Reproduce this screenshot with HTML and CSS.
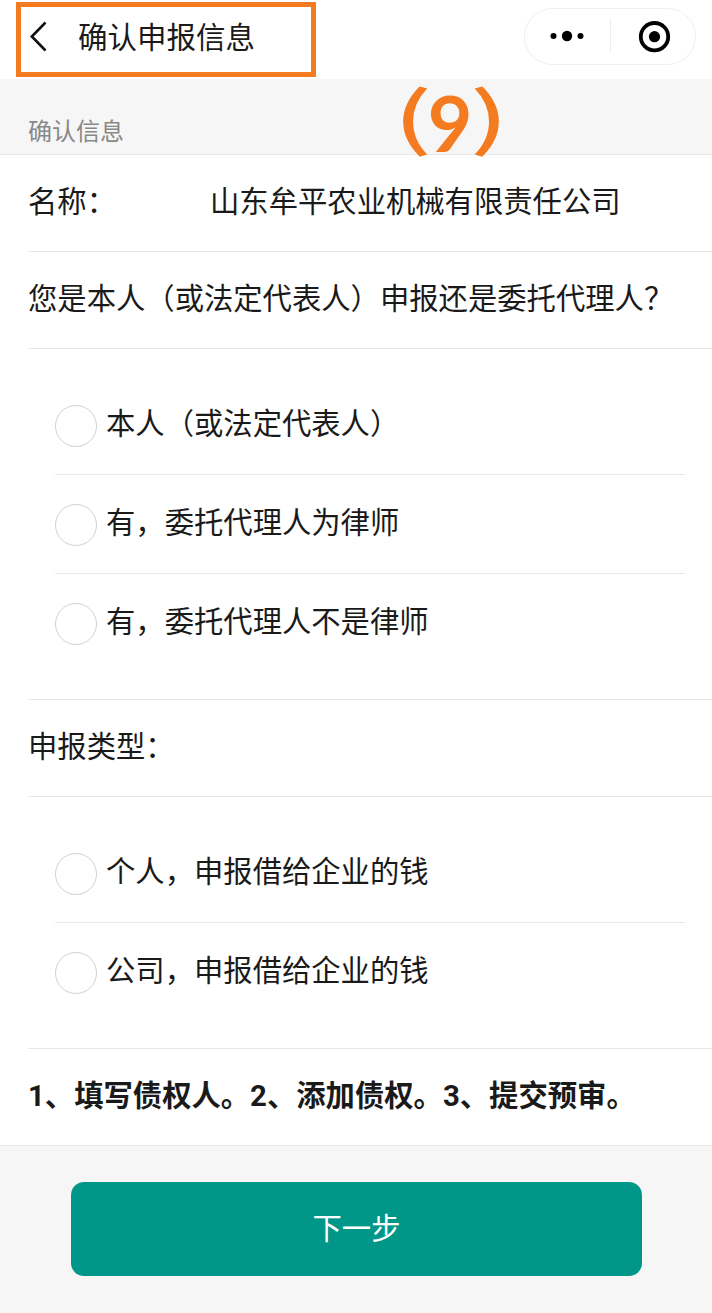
FILE: index.html
```html
<!DOCTYPE html>
<html lang="zh-CN">
<head>
  <meta charset="UTF-8" />
  <title>确认申报信息</title>
  <link rel="stylesheet" href="styles.css">
</head>
<body>
  <!-- =========  NAV BAR  ========= -->
  <header class="navbar">
    <div class="nav-title">
      <svg class="back" width="18" height="32" viewBox="0 0 18 32">
        <path d="M15.5 1.5 L1.8 15.5 L15.5 29.5" fill="none" stroke="#111" stroke-width="2.6"/>
      </svg>
      <h1>确认申报信息</h1>
    </div>
    <div class="capsule">
      <svg width="172" height="57" viewBox="0 0 172 57">
        <circle cx="29.5" cy="28" r="3"/>
        <circle cx="43" cy="28" r="5.2"/>
        <circle cx="56.5" cy="28" r="3"/>
        <path d="M86.5 10.5 V45" stroke="#ececec" stroke-width="1"/>
        <circle cx="130.5" cy="28.7" r="13.7" fill="none" stroke="#000" stroke-width="3.8"/>
        <circle cx="130.5" cy="28.7" r="5.6"/>
      </svg>
    </div>
  </header>

  <main>
    <div class="section-title">
      <span>确认信息</span>
      <div class="step-mark"><span class="paren">(</span><b>9</b><span class="paren">)</span></div>
    </div>

    <!-- ----------  FORM  ---------- -->
    <form class="cells">
      <div class="cell"><span class="label">名称：</span><span>山东牟平农业机械有限责任公司</span></div>
      <div class="cell">您是本人（或法定代表人）申报还是委托代理人？</div>
      <div class="options">
        <label class="option"><input type="radio" name="agent"><span>本人（或法定代表人）</span></label>
        <label class="option"><input type="radio" name="agent"><span>有，委托代理人为律师</span></label>
        <label class="option"><input type="radio" name="agent"><span>有，委托代理人不是律师</span></label>
      </div>
      <div class="cell">申报类型：</div>
      <div class="options">
        <label class="option"><input type="radio" name="type"><span>个人，申报借给企业的钱</span></label>
        <label class="option"><input type="radio" name="type"><span>公司，申报借给企业的钱</span></label>
      </div>
      <div class="cell steps">1、填写债权人。2、添加债权。3、提交预审。</div>
    </form>
  </main>

  <footer>
    <button class="btn" type="button">下一步</button>
  </footer>
</body>
</html>
```

FILE: styles.css
```css
:root {
  --primary: #009688;
  --mark: #f47b20;
  --line: #e8e8e8;
  --bg: #f6f6f6;
}

* { box-sizing: border-box; margin:0; padding:0; }

body {
  font-family: Roboto, "Noto Sans CJK SC", sans-serif;
  font-size:29.33px;
  line-height:42px;
  color:#1a1a1a;
  background: var(--bg);
  min-height:100vh;
}

/* --- nav bar --- */
.navbar {
  height:79px;
  background:#fff;
  display:flex;
  justify-content:space-between;
  align-items:flex-start;
  padding:2px 16px 0;
}
.nav-title {
  width:300px;
  height:75px;
  border:5px solid var(--mark);
  display:flex;
  align-items:flex-start;
  padding:13px 0 0 9px;
}
.back { margin-top:1px; }
.nav-title h1 {
  font-size:29.5px;
  font-weight:400;
  line-height:36px;
  margin-left:30px;
}
.capsule {
  width:172px;
  height:57px;
  margin-top:6px;
  border-radius:29px;
  box-shadow: inset 0 0 0 1px #f0f0f0;
}
.capsule svg { display:block; }

/* --- section title --- */
.section-title {
  height:75px;
  position:relative;
  padding:32px 28px 0;
  font-size:24px;
  color:#888;
}
.step-mark {
  position:absolute;
  left:394px;
  top:7px;
  z-index:1;
  width:114px;
  display:flex;
  justify-content:space-between;
  font-family: Lato, sans-serif;
  font-size:77px;
  line-height:72px;
  color: var(--mark);
}
.step-mark b { margin-left:-2px; }
/* wide round brackets on both sides of the number */
.step-mark .paren {
  font-family: "Noto Sans CJK SC", sans-serif;
  font-size:68px;
  font-weight:400;
  -webkit-text-stroke:1px var(--mark);
  transform:translateY(-8px) scaleX(1.6);
  transform-origin:left;
}
.step-mark .paren:last-child { transform-origin:right; }

/* --- form cells --- */
.cells {
  background:#fff;
  border-top:1px solid var(--line);
  border-bottom:1px solid var(--line);
}
.cell {
  height:97px;
  margin-left:28px;
  padding-top:26px;
  border-bottom:1px solid var(--line);
  display:flex;
  white-space:nowrap;
}
.label { width:182px; }
.steps {
  height:96px;
  font-weight:700;
  border-bottom:none;
}

.options {
  margin-left:28px;
  padding:27px 27px 27px 27px;
  border-bottom:1px solid var(--line);
}
.option {
  height:99px;
  display:flex;
  align-items:flex-start;
  padding-top:29px;
  border-bottom:1px solid var(--line);
}
.option:last-child { border-bottom:none; height:98px; }
.option span { margin:-2px 0 0 9px; }
.option input {
  appearance:none;
  width:42px;
  height:42px;
  border:1px solid #d1d1d1;
  border-radius:50%;
  background:#fff;
}

/* --- bottom button --- */
footer { padding:36px 70px 0 71px; }
.btn {
  display:block;
  width:100%;
  height:94px;
  background: var(--primary);
  border:none;
  border-radius:13px;
  color:#fff;
  font:inherit;
}
```
